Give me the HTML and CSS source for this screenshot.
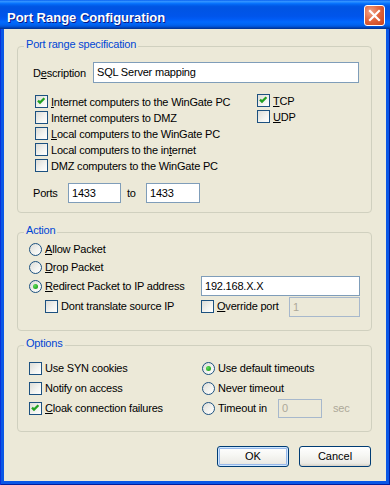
FILE: index.html
```html
<!DOCTYPE html>
<html>
<head>
<meta charset="utf-8">
<title>Port Range Configuration</title>
<link rel="stylesheet" href="styles.css">
</head>
<body>
<div class="window">
  <div class="titlebar">
    <span class="title">Port Range Configuration</span>
    <span class="close"><svg width="19" height="19" viewBox="0 0 19 19"><path d="M5 5 L14 14 M14 5 L5 14" stroke="#fff" stroke-width="2.2" stroke-linecap="square"/></svg></span>
  </div>
  <div class="frame">
    <div class="client">

      <div class="group g1">
        <div class="legend">Port range specification</div>
        <div class="desc-row">
          <span class="desc-label">D<u>e</u>scription</span>
          <span class="edit desc-edit">SQL Server mapping</span>
        </div>
        <div class="check-grid">
          <div class="col">
            <div class="opt tight"><span class="cb"><svg width="11" height="11" viewBox="0 0 11 11"><polyline points="2,4.6 4,6.6 8.4,2.2" fill="none" stroke="#21A121" stroke-width="2.3"/></svg></span><span><u>I</u>nternet computers to the WinGate PC</span></div>
            <div class="opt tight"><span class="cb"></span><span>Internet computers to DMZ</span></div>
            <div class="opt tight"><span class="cb"></span><span><u>L</u>ocal computers to the WinGate PC</span></div>
            <div class="opt tight"><span class="cb"></span><span>Local computers to the in<u>t</u>ernet</span></div>
            <div class="opt tight"><span class="cb"></span><span>DMZ computers to the WinGate PC</span></div>
          </div>
          <div class="col col-right">
            <div class="opt tight"><span class="cb"><svg width="11" height="11" viewBox="0 0 11 11"><polyline points="2,4.6 4,6.6 8.4,2.2" fill="none" stroke="#21A121" stroke-width="2.3"/></svg></span><span><u>T</u>CP</span></div>
            <div class="opt tight"><span class="cb"></span><span><u>U</u>DP</span></div>
          </div>
        </div>
        <div class="ports-row">
          <span class="ports-label">Ports</span>
          <span class="edit port1">1433</span>
          <span class="to-label">to</span>
          <span class="edit port2">1433</span>
        </div>
      </div>

      <div class="group g2">
        <div class="legend">Action</div>
        <div class="opt r1"><span class="rb"></span><span><u>A</u>llow Packet</span></div>
        <div class="opt r2"><span class="rb"></span><span><u>D</u>rop Packet</span></div>
        <div class="split r3">
          <div class="opt"><span class="rb on"></span><span><u>R</u>edirect Packet to IP address</span></div>
          <span class="edit ip-edit">192.168.X.X</span>
        </div>
        <div class="split r4">
          <div class="opt indent"><span class="cb"></span><span>Dont translate source IP</span></div>
          <div class="opt">
            <span class="cb"></span><span><u>O</u>verride port</span>
            <span class="edit disabled port-edit">1</span>
          </div>
        </div>
      </div>

      <div class="group g3">
        <div class="legend">Options</div>
        <div class="opt-grid">
          <div class="opt"><span class="cb"></span><span>Use SYN cookies</span></div>
          <div class="opt"><span class="rb on"></span><span>Use default timeouts</span></div>
          <div class="opt"><span class="cb"></span><span>Notify on access</span></div>
          <div class="opt"><span class="rb"></span><span>Never timeout</span></div>
          <div class="opt"><span class="cb"><svg width="11" height="11" viewBox="0 0 11 11"><polyline points="2,4.6 4,6.6 8.4,2.2" fill="none" stroke="#21A121" stroke-width="2.3"/></svg></span><span><u>C</u>loak connection failures</span></div>
          <div class="opt"><span class="rb"></span><span class="timeout-label">Timeout in</span><span class="edit disabled timeout-edit">0</span><span class="sec">sec</span></div>
        </div>
      </div>

      <div class="buttons">
        <span class="btn default">OK</span>
        <span class="btn">Cancel</span>
      </div>

    </div>
  </div>
</div>
</body>
</html>
```

FILE: styles.css
```css
* { box-sizing: border-box; }

body {
  margin: 0;
  background: #ffffff;
}

.window {
  width: 390px;
  height: 485px;
  display: flex;
  flex-direction: column;
  font-family: "Liberation Sans", Arial, sans-serif;
  font-size: 11px;
  letter-spacing: -0.2px;
  color: #000;
}

.titlebar {
  height: 29px;
  flex: none;
  display: flex;
  align-items: flex-start;
  justify-content: space-between;
  padding: 0 5px 0 7px;
  background: linear-gradient(to bottom,
    #0058EE 0%, #3593FF 4%, #288EFF 7%, #127DFF 10%, #036FFC 13%,
    #0262EE 17%, #0057E5 22%, #0054E3 28%, #0055EB 56%, #005BF5 66%,
    #026AFE 76%, #0062EF 86%, #0052D6 92%, #0040AB 96%, #003092 100%);
}

.title {
  margin-top: 10px;
  font-size: 13px;
  line-height: 16px;
  font-weight: bold;
  letter-spacing: 0;
  color: #ffffff;
  text-shadow: 1px 1px 0 #0A1883;
}

.close {
  margin-top: 5px;
  width: 21px;
  height: 21px;
  border: 1px solid #ffffff;
  border-radius: 3px;
  background: radial-gradient(circle at 30% 30%, #F0A48A 0%, #E2673F 45%, #C8401A 100%);
  display: flex;
}

.frame {
  flex: 1;
  display: flex;
  padding: 0 4px 4px 4px;
  background: #0A57E6;
  box-shadow: inset 1px 0 #0831D9, inset -1px 0 #001EA0, inset 0 -1px #001EA0;
}

.client {
  flex: 1;
  display: flex;
  flex-direction: column;
  background: #ECE9D8;
  padding: 17px 14px 0 13px;
}

/* group boxes */
.group {
  border: 1px solid #D0D0BF;
  border-radius: 4px;
}

.legend {
  width: max-content;
  height: 13px;
  line-height: 13px;
  margin-top: -9px;
  padding: 0 2px;
  background: #ECE9D8;
  color: #0046D5;
}

.g1 { padding: 0 12px 9px 15px; }
.g1 .legend { margin-left: -9px; }
.g2 { margin-top: 19px; padding: 0 11px 15px 11px; }
.g3 { margin-top: 14px; padding: 0 11px 14px 11px; }
.g2 .legend, .g3 .legend { margin-left: -5px; }

/* edit boxes */
.edit {
  display: block;
  height: 21px;
  line-height: 19px;
  padding: 0 3px;
  border: 1px solid #7F9DB9;
  background: #ffffff;
  white-space: nowrap;
  flex: none;
}

.edit.disabled {
  background: #ECE9D8;
  border-color: #A7B8CC;
  color: #ACA899;
}

/* description */
.desc-row {
  margin-top: 11px;
  display: flex;
  align-items: center;
  height: 21px;
}
.desc-label { width: 60px; flex: none; }
.desc-edit { flex: 1; }

/* check grid */
.check-grid {
  margin: 11px 0 0 2px;
  display: grid;
  grid-template-columns: 222px auto;
}
.col-right { margin-top: -1px; }

/* option rows */
.opt {
  display: flex;
  align-items: center;
  gap: 3px;
  height: 17px;
  line-height: 17px;
  white-space: nowrap;
}
.opt.tight {
  height: 16px;
  line-height: 16px;
  align-items: flex-start;
}
.opt.tight .cb { margin-top: 1px; }

.cb {
  width: 13px;
  height: 13px;
  flex: none;
  border: 1px solid #1C5180;
  background: linear-gradient(135deg, #DCDCD7 0%, #F4F4F1 60%, #FFFFFF 100%);
  display: flex;
}

.rb {
  width: 13px;
  height: 13px;
  flex: none;
  border: 1px solid #1C5180;
  border-radius: 50%;
  background: linear-gradient(135deg, #DCDCD7 0%, #F4F4F1 60%, #FFFFFF 100%);
  display: flex;
  align-items: center;
  justify-content: center;
}
.rb.on::after {
  content: "";
  width: 5px;
  height: 5px;
  border-radius: 50%;
  background: radial-gradient(circle at 35% 35%, #5EDB5A 0%, #2DB02A 60%, #1A8F18 100%);
}

/* ports */
.ports-row {
  margin-top: 9px;
  display: flex;
  align-items: center;
  height: 20px;
}
.ports-row .edit { height: 20px; line-height: 18px; }
.ports-label { width: 35px; flex: none; }
.port1 { width: 53px; }
.to-label { width: 19px; margin-left: 6px; flex: none; }
.port2 { width: 54px; }

/* action */
.r1 { margin-top: 4px; }
.r2 { margin-top: 1px; }

.split {
  display: grid;
  grid-template-columns: 172px 1fr;
  align-items: center;
  height: 17px;
}
.r3 { margin-top: 0; }
.r4 { margin-top: 5px; }
.ip-edit { height: 20px; line-height: 18px; }
.indent { margin-left: 16px; }
.port-edit { width: 71px; height: 20px; line-height: 18px; margin-left: auto; }

/* options */
.opt-grid {
  margin-top: 10px;
  display: grid;
  grid-template-columns: 173px 1fr;
  row-gap: 3px;
}
.timeout-label { width: 57px; flex: none; }
.timeout-edit { width: 44px; height: 19px; line-height: 17px; }
.sec { margin-left: 8px; color: #ACA899; }

/* buttons */
.buttons {
  margin-top: 14px;
  display: flex;
  justify-content: flex-end;
  gap: 10px;
  padding-right: 1px;
}

.btn {
  width: 72px;
  height: 21px;
  line-height: 19px;
  text-align: center;
  letter-spacing: 0;
  border: 1px solid #003C74;
  border-radius: 3px;
  background: linear-gradient(to bottom, #FFFFFF 0%, #F7F7F4 40%, #ECEBE6 85%, #D6D0C5 100%);
}
.btn.default {
  box-shadow: inset 0 0 0 1px #CEE7FF, inset 0 0 0 2px #98B8EA;
}
```
